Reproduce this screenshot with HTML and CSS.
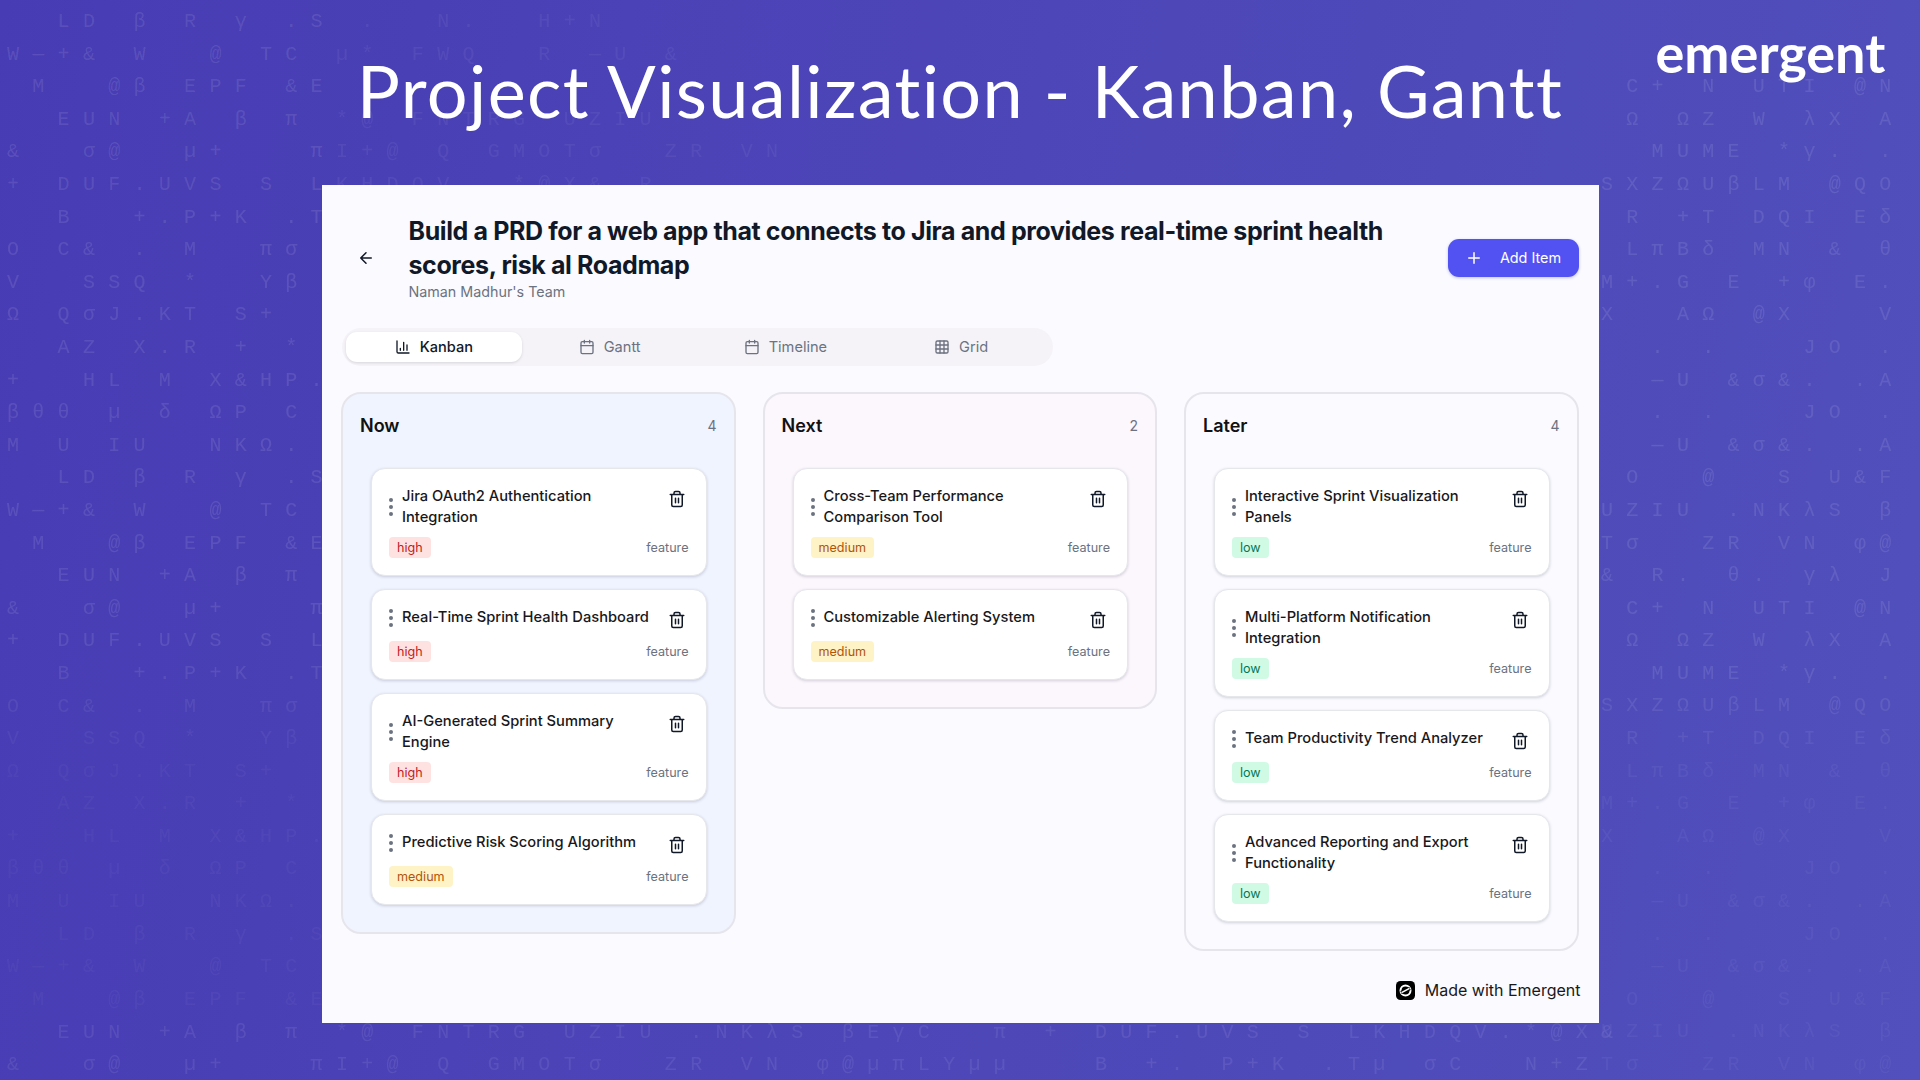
FILE: index.html
```html
<!DOCTYPE html>
<html lang="en">
<head>
  <meta charset="UTF-8">
  <meta name="viewport" content="width=device-width, initial-scale=1">
  <title>Project Visualization - Kanban, Gantt</title>
  <link rel="stylesheet" href="styles.css">
</head>
<body>
  <svg class="sprite" xmlns="http://www.w3.org/2000/svg">
    <symbol id="i-trash" viewBox="0 0 24 24"><path d="M3 6h18M19 6v14c0 1-1 2-2 2H7c-1 0-2-1-2-2V6M8 6V4c0-1 1-2 2-2h4c1 0 2 1 2 2v2M10 11v6M14 11v6"/></symbol>
    <symbol id="i-dots" viewBox="0 0 4 18"><circle cx="2" cy="2" r="2"/><circle cx="2" cy="9" r="2"/><circle cx="2" cy="16" r="2"/></symbol>
    <symbol id="i-calendar" viewBox="0 0 24 24"><path d="M8 2v4M16 2v4M3 10h18"/><rect x="3" y="4" width="18" height="18" rx="2"/></symbol>
  </svg>

  <pre class="glyphs glyphs-top">  LD β R γ .S<span class="dim"> .  N.  H+N</span>
W—+&amp; W  @ TC<span class="dim"> µ* FWQ  R —U &amp;</span>
 M  @β EPF &amp;E<span class="dim"> .</span>
  EUN +A β π<span class="dim"> *@ FNTRG UZIU</span>
&amp;  σ@  µ+   π<span class="dim">I+@ Q GMOTσ  ZR VN</span>
+ DUF.UVS S L<span class="dim">KHDQV  *@X&amp; R</span></pre>

  <pre class="glyphs glyphs-left">  B  +.P+K .T
O C&amp; . M  πσ
V  SSQ *  Yβ
Ω QσJ.KT S+
  AZ X.R + *
+  HL M X&amp;HP.
βθθ µ δ ΩP C
M U IU  NKΩ.
  LD β R γ .S
W—+&amp; W  @ TC
 M  @β EPF &amp;E
  EUN +A β π
&amp;  σ@  µ+   π
+ DUF.UVS S L
  B  +.P+K .T
O C&amp; . M  πσ
V  SSQ *  Yβ
Ω QσJ.KT S+
  AZ X.R + *
+  HL M X&amp;HP.
βθθ µ δ ΩP C
M U IU  NKΩ.
  LD β R γ .S
W—+&amp; W  @ TC
 M  @β EPF &amp;E</pre>

  <pre class="glyphs glyphs-bottom">  EUN +A β π *@ FNTRG UZIU .NKλS βEγC  π + DUF.UVS S LKHDQV.*@X&amp;
&amp;  σ@  µ+   πI+@ Q GMOTσ  ZR VN φ@µπLYµµ   B +. P+K .Tµ σC  N+Z</pre>

  <pre class="glyphs glyphs-right"> C+ N UTI @N
 Ω ΩZ W λX A
  MUME *γ. .
SXZΩUβLM @QO
 R +T DQI Eδ
 LπBδ MN &amp; θ
M+.G E +φ E.
X  AΩ @X   V
  . .   JO .
  —U &amp;σ&amp;. .A
  . .   JO .
  —U &amp;σ&amp;. .A
 O  @  S U&amp;F
UZIU .NKλS β
Tσ  ZR VN φ@
&amp; R. θ. γλ J
 C+ N UTI @N
 Ω ΩZ W λX A
  MUME *γ. .
SXZΩUβLM @QO
 R +T DQI Eδ
 LπBδ MN &amp; θ
M+.G E +φ E.
X  AΩ @X   V
  . .   JO .
  —U &amp;σ&amp;. .A
  . .   JO .
  —U &amp;σ&amp;. .A
 O  @  S U&amp;F
UZIU .NKλS β
Tσ  ZR VN φ@</pre>

  <div class="slide">
    <header class="slide-head">
      <h1>Project Visualization - Kanban, Gantt</h1>
      <span class="logo">emergent</span>
    </header>

    <main class="panel">
      <div class="page-head">
        <button class="back">
          <svg class="icon" width="18" height="18" viewBox="0 0 24 24"><path d="M12 19l-7-7 7-7M19 12H5"/></svg>
        </button>
        <div class="page-title">
          <h2>Build a PRD for a web app that connects to Jira and provides real-time sprint health scores, risk al Roadmap</h2>
          <p>Naman Madhur's Team</p>
        </div>
        <button class="add-item">
          <svg class="icon" width="18" height="18" viewBox="0 0 24 24"><path d="M5 12h14M12 5v14"/></svg>
          Add Item
        </button>
      </div>

      <nav class="tabs">
        <a class="tab active">
          <svg class="icon" width="16" height="16" viewBox="0 0 24 24"><path d="M3 3v16a2 2 0 0 0 2 2h16M18 17V9M13 17V5M8 17v-3"/></svg>
          Kanban
        </a>
        <a class="tab">
          <svg class="icon" width="16" height="16"><use href="#i-calendar"/></svg>
          Gantt
        </a>
        <a class="tab">
          <svg class="icon" width="16" height="16"><use href="#i-calendar"/></svg>
          Timeline
        </a>
        <a class="tab">
          <svg class="icon" width="16" height="16" viewBox="0 0 24 24"><rect x="3" y="3" width="18" height="18" rx="2"/><path d="M3 9h18M3 15h18M9 3v18M15 3v18"/></svg>
          Grid
        </a>
      </nav>

      <div class="board">
        <section class="column now">
          <div class="column-head"><h3>Now</h3><span>4</span></div>
          <div class="cards">
            <article class="card">
              <div class="card-top">
                <div class="card-title"><svg class="dots"><use href="#i-dots"/></svg><span>Jira OAuth2 Authentication Integration</span></div>
                <button class="trash"><svg class="icon" width="18" height="18"><use href="#i-trash"/></svg></button>
              </div>
              <div class="card-foot"><span class="badge high">high</span><span class="type">feature</span></div>
            </article>
            <article class="card">
              <div class="card-top">
                <div class="card-title"><svg class="dots"><use href="#i-dots"/></svg><span>Real-Time Sprint Health Dashboard</span></div>
                <button class="trash"><svg class="icon" width="18" height="18"><use href="#i-trash"/></svg></button>
              </div>
              <div class="card-foot"><span class="badge high">high</span><span class="type">feature</span></div>
            </article>
            <article class="card">
              <div class="card-top">
                <div class="card-title"><svg class="dots"><use href="#i-dots"/></svg><span>AI-Generated Sprint Summary Engine</span></div>
                <button class="trash"><svg class="icon" width="18" height="18"><use href="#i-trash"/></svg></button>
              </div>
              <div class="card-foot"><span class="badge high">high</span><span class="type">feature</span></div>
            </article>
            <article class="card">
              <div class="card-top">
                <div class="card-title"><svg class="dots"><use href="#i-dots"/></svg><span>Predictive Risk Scoring Algorithm</span></div>
                <button class="trash"><svg class="icon" width="18" height="18"><use href="#i-trash"/></svg></button>
              </div>
              <div class="card-foot"><span class="badge medium">medium</span><span class="type">feature</span></div>
            </article>
          </div>
        </section>

        <section class="column next">
          <div class="column-head"><h3>Next</h3><span>2</span></div>
          <div class="cards">
            <article class="card">
              <div class="card-top">
                <div class="card-title"><svg class="dots"><use href="#i-dots"/></svg><span>Cross-Team Performance Comparison Tool</span></div>
                <button class="trash"><svg class="icon" width="18" height="18"><use href="#i-trash"/></svg></button>
              </div>
              <div class="card-foot"><span class="badge medium">medium</span><span class="type">feature</span></div>
            </article>
            <article class="card">
              <div class="card-top">
                <div class="card-title"><svg class="dots"><use href="#i-dots"/></svg><span>Customizable Alerting System</span></div>
                <button class="trash"><svg class="icon" width="18" height="18"><use href="#i-trash"/></svg></button>
              </div>
              <div class="card-foot"><span class="badge medium">medium</span><span class="type">feature</span></div>
            </article>
          </div>
        </section>

        <section class="column later">
          <div class="column-head"><h3>Later</h3><span>4</span></div>
          <div class="cards">
            <article class="card">
              <div class="card-top">
                <div class="card-title"><svg class="dots"><use href="#i-dots"/></svg><span>Interactive Sprint Visualization Panels</span></div>
                <button class="trash"><svg class="icon" width="18" height="18"><use href="#i-trash"/></svg></button>
              </div>
              <div class="card-foot"><span class="badge low">low</span><span class="type">feature</span></div>
            </article>
            <article class="card">
              <div class="card-top">
                <div class="card-title"><svg class="dots"><use href="#i-dots"/></svg><span>Multi-Platform Notification Integration</span></div>
                <button class="trash"><svg class="icon" width="18" height="18"><use href="#i-trash"/></svg></button>
              </div>
              <div class="card-foot"><span class="badge low">low</span><span class="type">feature</span></div>
            </article>
            <article class="card">
              <div class="card-top">
                <div class="card-title"><svg class="dots"><use href="#i-dots"/></svg><span>Team Productivity Trend Analyzer</span></div>
                <button class="trash"><svg class="icon" width="18" height="18"><use href="#i-trash"/></svg></button>
              </div>
              <div class="card-foot"><span class="badge low">low</span><span class="type">feature</span></div>
            </article>
            <article class="card">
              <div class="card-top">
                <div class="card-title"><svg class="dots"><use href="#i-dots"/></svg><span>Advanced Reporting and Export Functionality</span></div>
                <button class="trash"><svg class="icon" width="18" height="18"><use href="#i-trash"/></svg></button>
              </div>
              <div class="card-foot"><span class="badge low">low</span><span class="type">feature</span></div>
            </article>
          </div>
        </section>
      </div>

      <div class="made-with">
        <svg class="made-icon" width="19" height="19" viewBox="0 0 19 19">
          <rect width="19" height="19" rx="4.5" fill="#000"/>
          <circle cx="9.5" cy="9.5" r="5" fill="none" stroke="#fff" stroke-width="2"/>
          <path d="M5 11.5L14 7.5" stroke="#000" stroke-width="3.4"/>
          <path d="M5.5 11.6L13.5 7.4" stroke="#fff" stroke-width="1.6"/>
        </svg>
        Made with Emergent
      </div>
    </main>
  </div>
</body>
</html>
```

FILE: styles.css
```css
* { box-sizing: border-box; }
body {
  margin: 0;
  width: 1920px;
  height: 1080px;
  overflow: hidden;
  position: relative;
  font-family: 'Inter', sans-serif;
  background: linear-gradient(100deg, #483cb4, #5150bc);
}
.sprite { display: none; }

/* faint letter rain behind everything */
.glyphs {
  position: absolute;
  margin: 0;
  font-family: 'Liberation Mono', monospace;
  font-size: 20px;
  line-height: 32.6px;
  letter-spacing: 13.3px;
  color: rgba(255, 255, 255, 0.1);
  white-space: pre;
}
.glyphs .dim { opacity: 0.55; }
.glyphs-top { top: 6px; left: 7px; }
.glyphs-left {
  top: 201.6px;
  left: 7px;
  -webkit-mask-image: linear-gradient(to bottom, #000 55%, rgba(0, 0, 0, 0.35) 68%);
  mask-image: linear-gradient(to bottom, #000 55%, rgba(0, 0, 0, 0.35) 68%);
}
.glyphs-bottom { top: 1016.6px; left: 7px; opacity: 0.8; }
.glyphs-right {
  top: 71.2px;
  left: 1601px;
  -webkit-mask-image: linear-gradient(to bottom, #000 60%, rgba(0, 0, 0, 0.45) 70%);
  mask-image: linear-gradient(to bottom, #000 60%, rgba(0, 0, 0, 0.45) 70%);
}

.slide {
  position: relative;
  width: 1277px;
  margin: 0 auto;
}
.slide-head {
  height: 185px;
  display: flex;
  justify-content: center;
  padding-top: 47px;
}
.slide-head h1 {
  margin: 0;
  font-family: 'Lato', sans-serif;
  font-weight: 400;
  font-size: 72px;
  line-height: 86px;
  letter-spacing: 1.35px;
  color: #fff;
  white-space: nowrap;
}
.logo {
  position: absolute;
  top: 17px;
  left: 1334px;
  font-family: 'Lato', sans-serif;
  font-weight: 700;
  font-size: 54px;
  line-height: 72px;
  color: #fff;
}

.panel {
  position: relative;
  height: 838px;
  padding: 30px 20px 0 19.5px;
  background: #fafaff;
}
.icon {
  fill: none;
  stroke: currentColor;
  stroke-width: 2;
  stroke-linecap: round;
  stroke-linejoin: round;
  flex: none;
}

.page-head {
  display: flex;
  align-items: center;
  gap: 18.5px;
}
.back {
  width: 48px;
  height: 40px;
  margin: -2px 0 0 1px;
  border: none;
  padding: 0;
  background: none;
  color: #111827;
  display: flex;
  align-items: center;
  justify-content: center;
}
.page-title { width: 1000px; margin-right: auto; }
.page-title h2 {
  margin: 0;
  font-size: 25px;
  line-height: 33.6px;
  font-weight: 700;
  letter-spacing: -0.39px;
  color: #111827;
}
.page-title p {
  margin: 0;
  font-size: 14.3px;
  line-height: 20px;
  color: #6b7280;
}
.add-item {
  width: 131px;
  height: 38px;
  margin-top: -2px;
  border: none;
  border-radius: 11px;
  background: #5252f2;
  color: #fff;
  font-family: inherit;
  font-size: 14.4px;
  font-weight: 400;
  display: flex;
  align-items: center;
  justify-content: center;
  gap: 17px;
  box-shadow: 0 1px 3px rgba(60, 60, 180, 0.3);
}

.tabs {
  display: flex;
  width: 711px;
  height: 38px;
  margin: 26px 0 0 1px;
  padding: 4px;
  border-radius: 19px;
  background: #f5f3f8;
}
.tab {
  flex: 1;
  height: 30px;
  border-radius: 11px;
  display: flex;
  align-items: center;
  justify-content: center;
  gap: 9px;
  font-size: 14.6px;
  color: #6b7280;
}
.tab.active {
  background: #fff;
  color: #111827;
  font-weight: 500;
  box-shadow: 0 1px 3px rgba(0, 0, 0, 0.12);
}

.board {
  display: grid;
  grid-template-columns: repeat(3, 1fr);
  gap: 27px;
  align-items: start;
  margin-top: 26px;
}
.column {
  border: 2px solid #e7e5ec;
  border-radius: 20px;
  padding: 19px 17px 27px;
}
.column.now { background: #f0f4ff; }
.column.next { background: #fcf6fd; }
.column.later { background: #fafaff; }
.column-head {
  display: flex;
  justify-content: space-between;
  align-items: center;
  height: 24px;
  margin-bottom: 31px;
}
.column-head h3 {
  margin: 0;
  font-size: 18px;
  font-weight: 600;
  color: #111;
}
.column-head span {
  font-size: 14px;
  color: #6b7280;
}

.cards {
  display: flex;
  flex-direction: column;
  gap: 13px;
  padding: 0 10px 0 11px;
}
.card {
  background: #fff;
  border: 1px solid #e5e7eb;
  border-radius: 14px;
  padding: 17px;
  box-shadow: 0 1px 3px rgba(30, 30, 60, 0.18);
}
.card-top {
  display: flex;
  justify-content: space-between;
  align-items: flex-start;
  min-height: 25px;
  margin-bottom: 9px;
}
.card-title {
  display: flex;
  align-items: center;
  gap: 9px;
  width: 263px;
  font-size: 14.7px;
  line-height: 21px;
  font-weight: 450;
  color: #18181b;
}
.dots {
  flex: none;
  width: 4px;
  height: 18px;
  fill: #6b7280;
}
.trash {
  width: 24px;
  height: 25px;
  border: none;
  padding: 0;
  background: none;
  color: #111827;
  display: flex;
  align-items: center;
  justify-content: center;
}
.card-foot {
  display: flex;
  justify-content: space-between;
  align-items: center;
  height: 21px;
}
.badge {
  height: 21px;
  padding: 0 8px;
  border-radius: 4px;
  font-size: 12.6px;
  line-height: 21px;
}
.badge.high { background: #fee2e2; color: #c22121; }
.badge.medium { background: #fef3c7; color: #b45309; }
.badge.low { background: #d1fae5; color: #047857; }
.type {
  font-size: 12.6px;
  color: #6b7280;
}

.made-with {
  position: absolute;
  right: 18px;
  bottom: 23px;
  display: flex;
  align-items: center;
  gap: 10px;
  font-size: 16px;
  color: #18181b;
}
```
